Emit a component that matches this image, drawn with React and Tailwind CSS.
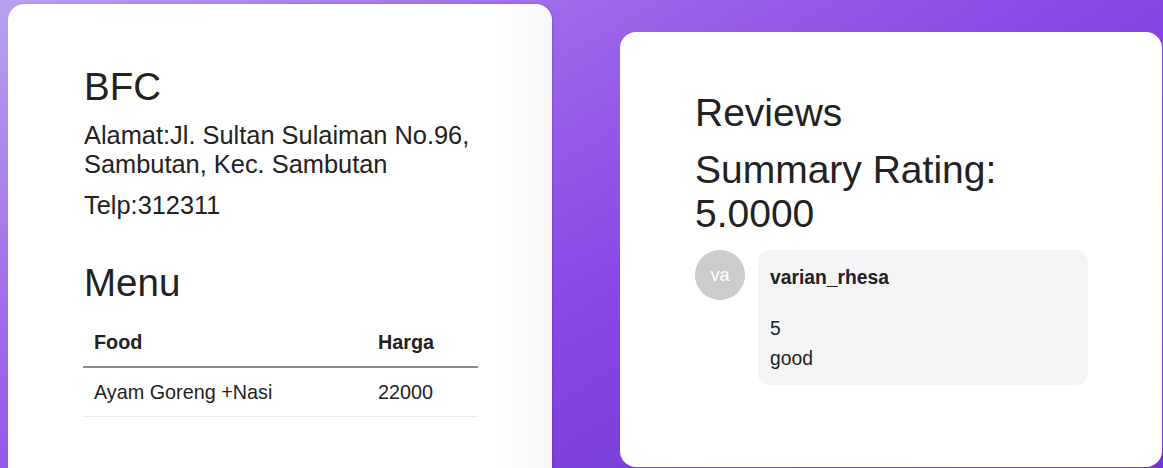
import React from 'react';

const menu = [{ food: 'Ayam Goreng +Nasi', harga: 22000 }];

const reviews = [{ user: 'varian_rhesa', rating: 5, comment: 'good' }];

export default function App() {
    return (
        <div
            className="h-[468px] w-full overflow-hidden bg-[linear-gradient(150deg,#b9a0f0_0%,#9d68e9_30%,#8845e6_58%,#7a40d8_75%,#7136d4_100%)] text-[#222]"
            style={{ fontFamily: '"Liberation Sans", Arial, sans-serif' }}
        >
            <div className="flex items-start gap-[68px] pl-2">
                {/* Restaurant card */}
                <div className="mt-1 h-[500px] w-[544px] shrink-0 rounded-2xl bg-gradient-to-r from-white from-90% to-[#f7f7f9] px-[76px] pt-[61px] shadow-[1px_0_2px_rgba(60,40,90,0.25)]">
                    <h1 className="text-[38.5px] leading-[44px]">BFC</h1>
                    <p className="mt-[12px] text-[25.4px] leading-[29px]">
                        Alamat:Jl. Sultan Sulaiman No.96, Sambutan, Kec. Sambutan
                    </p>
                    <p className="mt-[12px] text-[25.4px] leading-[29px]">Telp:312311</p>

                    <h2 className="mt-[41px] text-[38.5px] leading-[44px]">Menu</h2>
                    <table className="mt-[13px] w-[395px] -ml-px border-collapse text-left text-[19.8px] leading-[24px]">
                        <thead>
                            <tr className="border-b-2 border-[#8a8a8a]">
                                <th className="w-[284px] px-[11px] py-3 font-bold">Food</th>
                                <th className="px-[11px] py-3 font-bold">Harga</th>
                            </tr>
                        </thead>
                        <tbody>
                            {menu.map((m) => (
                                <tr key={m.food} className="border-b border-[#ececec]">
                                    <td className="px-[11px] py-3">{m.food}</td>
                                    <td className="px-[11px] py-3">{m.harga}</td>
                                </tr>
                            ))}
                        </tbody>
                    </table>
                </div>

                {/* Reviews card */}
                <div className="mt-8 h-[435px] w-[542px] shrink-0 rounded-2xl bg-white pl-[75px] pr-[60px] pt-[59px]">
                    <h2 className="text-[39px] leading-[44px]">Reviews</h2>
                    <h3 className="mt-[13px] w-[400px] text-[39px] leading-[44px]">Summary Rating: 5.0000</h3>

                    <div className="mt-[14px] flex flex-col gap-4">
                        {reviews.map((r) => (
                            <div key={r.user} className="flex items-start gap-[13px]">
                                <div className="flex h-[50px] w-[50px] shrink-0 items-center justify-center rounded-full bg-[#cccccc] text-[18px] text-white">
                                    {r.user.slice(0, 2)}
                                </div>
                                <div className="w-[330px] shrink-0 rounded-xl bg-[#f3f4f6] px-[12px] pb-[11px] pt-4 text-[19.3px]">
                                    <h4 className="font-bold leading-[23px]">{r.user}</h4>
                                    <p className="mt-[25px] leading-[30px]">{r.rating}</p>
                                    <p className="leading-[30px]">{r.comment}</p>
                                </div>
                            </div>
                        ))}
                    </div>
                </div>
            </div>
        </div>
    );
}
